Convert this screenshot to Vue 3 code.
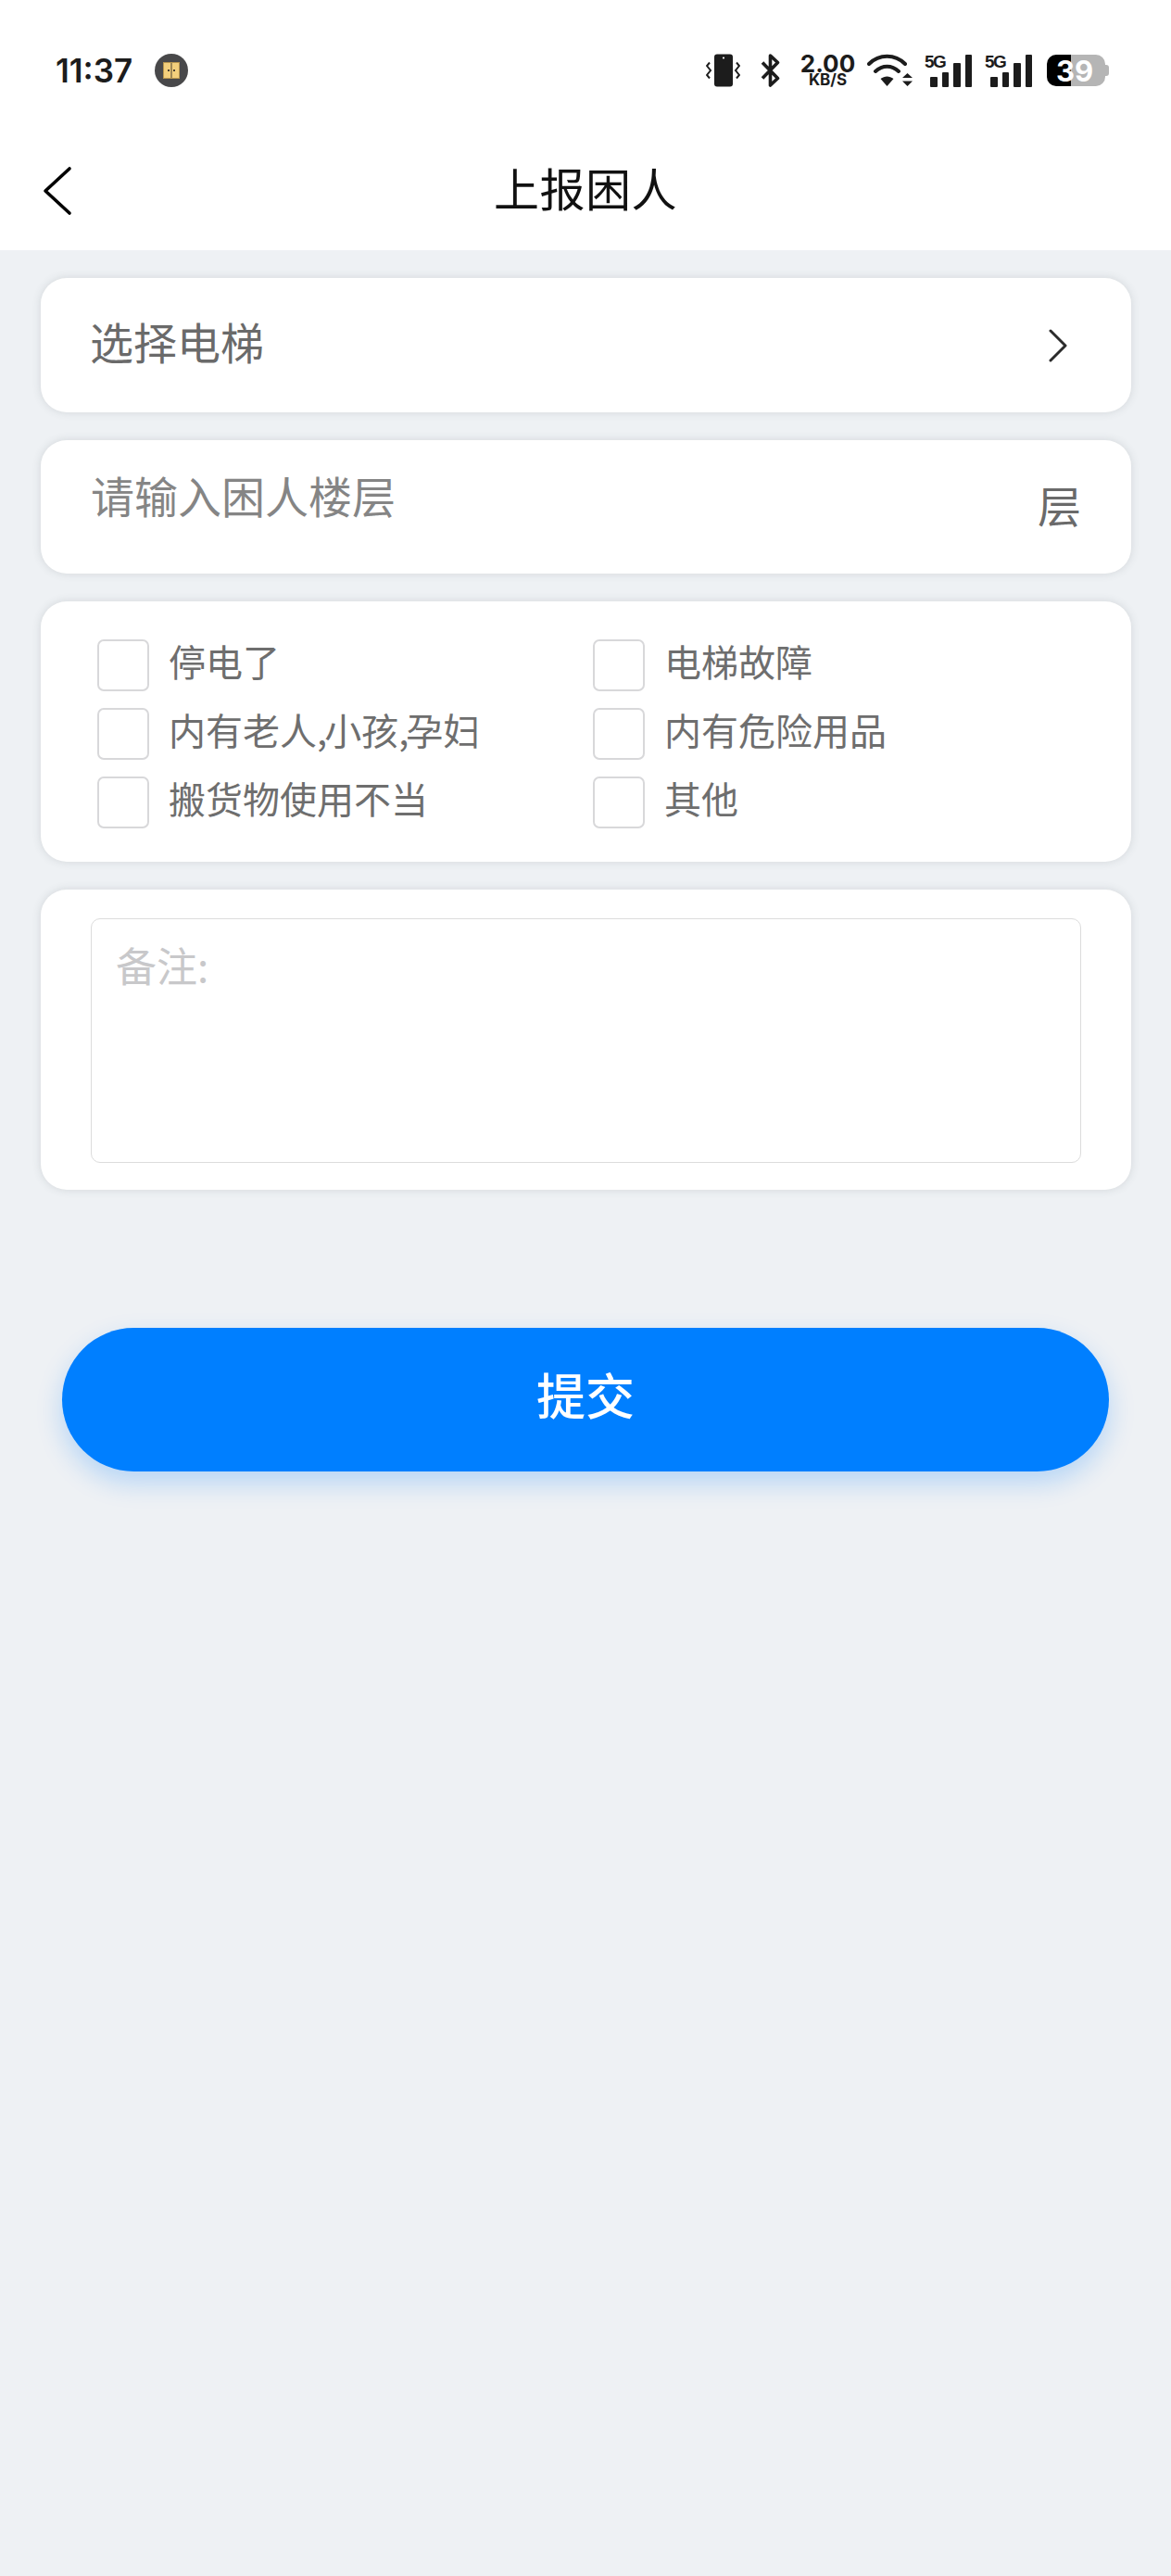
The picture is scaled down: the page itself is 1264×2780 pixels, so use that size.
<script setup>
const reasons = [
  "停电了",
  "电梯故障",
  "内有老人,小孩,孕妇",
  "内有危险用品",
  "搬货物使用不当",
  "其他",
];
</script>

<template>
  <div class="page">
    <div class="status">
      <div class="status-left">
        <span class="time">11:37</span>
        <span class="app-dot">
          <svg width="18" height="18" viewBox="0 0 18 18">
            <rect x="0.5" y="0.5" width="17" height="17" fill="#f3cf7c" stroke="#b8964e" />
            <path d="M9 1v16" stroke="#4a4030" stroke-width="1" />
            <path d="M5 9h2M11 9h2" stroke="#4a4030" stroke-width="2" />
          </svg>
        </span>
      </div>
      <div class="status-right">
        <svg class="ic-vib" width="37" height="36" viewBox="0 0 37 36">
          <rect x="9" y="0.5" width="20" height="35" rx="3" fill="#1c1c1c" />
          <circle cx="19" cy="4.5" r="1.1" fill="#fff" />
          <path d="M4 9.5L1 13l4 5-4 5 3 3.5M33 9.5l3 3.5-4 5 4 5-3 3.5" fill="none" stroke="#1c1c1c" stroke-width="2" />
        </svg>
        <svg class="ic-bt" width="21" height="36" viewBox="0 0 21 36">
          <path d="M2 9.5l16.5 17-8 7.5V2l8 7.5L2 26.5" fill="none" stroke="#1c1c1c" stroke-width="3.6" stroke-linejoin="round" />
        </svg>
        <div class="speed">
          <span class="speed-num">2.00</span>
          <span class="speed-unit">KB/S</span>
        </div>
        <svg class="ic-wifi" width="49" height="36" viewBox="0 0 49 36">
          <path d="M2 11C13 0 30 0 41 11M9 19c7.500-7 17.500-7 25 0" fill="none" stroke="#1c1c1c" stroke-width="4" stroke-linecap="round" />
          <path d="M14.500 27c4.500-3.500 9.500-3.500 14 0l-7 8z" fill="#1c1c1c" />
          <path d="M38 26l5.500-5 5.500 5zM38 29.500l5.500 5.500 5.500-5.500z" fill="#1c1c1c" />
        </svg>
        <div class="signal">
          <span class="five-g">5G</span>
          <span class="bar b1"></span>
          <span class="bar b2"></span>
          <span class="bar b3"></span>
          <span class="bar b4"></span>
        </div>
        <div class="signal second">
          <span class="five-g">5G</span>
          <span class="bar b1"></span>
          <span class="bar b2"></span>
          <span class="bar b3"></span>
          <span class="bar b4"></span>
        </div>
        <div class="battery">
          <span class="level">39</span>
          <span class="cap"></span>
        </div>
      </div>
    </div>

    <div class="nav">
      <svg class="back" width="32" height="54" viewBox="0 0 32 54">
        <path d="M29 3L3 27l26 24" fill="none" stroke="#000" stroke-width="3.6" stroke-linecap="round" stroke-linejoin="round" />
      </svg>
      <span class="title">上报困人</span>
    </div>

    <div class="content">
      <div class="card select-row">
        <span class="select-text">选择电梯</span>
        <svg width="22" height="36" viewBox="0 0 22 36">
          <path d="M3 2l16 16L3 34" fill="none" stroke="#2b2b2b" stroke-width="3" stroke-linecap="round" stroke-linejoin="round" />
        </svg>
      </div>

      <div class="card floor-row">
        <span class="floor-input">请输入困人楼层</span>
        <span class="floor-unit">层</span>
      </div>

      <div class="card reasons">
        <label v-for="r in reasons" :key="r" class="reason">
          <span class="box"></span>
          <span>
            <template v-for="(part, i) in r.split(',')" :key="i">
              <span v-if="i" class="comma">,</span>{{ part }}
            </template>
          </span>
        </label>
      </div>

      <div class="card remark-card">
        <div class="remark">备注:</div>
      </div>

      <button class="submit">提交</button>
    </div>
  </div>
</template>

<style scoped>
.page {
  width: 1264px;
  height: 2780px;
  background: #eef1f4;
  font-family: "Noto Sans CJK SC", "Liberation Sans", sans-serif;
  overflow: hidden;
}

.status {
  height: 130px;
  background: #fff;
  display: flex;
  justify-content: space-between;
  align-items: center;
  padding: 22px 67px 0 60px;
  box-sizing: border-box;
}

.status-left {
  display: flex;
  align-items: center;
  gap: 24px;
}

.time {
  font-family: Inter, sans-serif;
  font-weight: 600;
  font-size: 35px;
  color: #1c1c1c;
}

.app-dot {
  width: 36px;
  height: 36px;
  border-radius: 50%;
  background: #48484a;
  display: flex;
  align-items: center;
  justify-content: center;
}

.status-right {
  display: flex;
  align-items: center;
  gap: 14px;
}

.ic-bt {
  margin: 0 9px 0 8px;
}

.speed {
  display: flex;
  flex-direction: column;
  align-items: center;
  width: 57px;
  font-family: Inter, sans-serif;
  color: #1c1c1c;
  font-weight: 700;
}

.speed-num {
  font-size: 26px;
  line-height: 20px;
}

.speed-unit {
  font-size: 17px;
  line-height: 15px;
}

.signal {
  position: relative;
  width: 50px;
  height: 36px;
  display: flex;
  align-items: flex-end;
  gap: 5px;
  padding-left: 5px;
  box-sizing: border-box;
}

.signal.second {
  margin-left: 1px;
}

.five-g {
  position: absolute;
  left: -1px;
  top: -1px;
  font-family: "Liberation Sans", sans-serif;
  font-weight: 700;
  font-size: 19px;
  letter-spacing: -1.5px;
  line-height: 1;
  color: #1c1c1c;
}

.bar {
  width: 7.5px;
  background: #1c1c1c;
  border-radius: 1px;
}

.b1 { height: 11px; }
.b2 { height: 16px; }
.b3 { height: 26px; }
.b4 { height: 35px; }

.battery {
  position: relative;
  width: 63px;
  height: 34px;
  margin: 0 4px 0 2px;
  border-radius: 10px;
  background: linear-gradient(90deg, #000 26px, #b5b5b5 26px);
  display: flex;
  align-items: center;
  justify-content: center;
}

.level {
  font-family: Inter, sans-serif;
  font-weight: 700;
  font-size: 31px;
  margin-right: 3px;
  color: #fff;
}

.cap {
  position: absolute;
  right: -4px;
  top: 11px;
  width: 4px;
  height: 12px;
  background: #b5b5b5;
  border-radius: 0 3px 3px 0;
}

.nav {
  position: relative;
  height: 140px;
  padding-top: 3px;
  box-sizing: border-box;
  background: #fff;
  display: flex;
  align-items: center;
  justify-content: center;
}

.back {
  position: absolute;
  left: 46px;
  top: 49px;
}

.title {
  font-size: 49px;
  color: #111;
  letter-spacing: 0.5px;
}

.content {
  display: flex;
  flex-direction: column;
  gap: 30px;
  padding: 30px 43px 0 44px;
}

.card {
  background: #fff;
  border-radius: 28px;
  box-shadow: 0 0 10px rgba(70, 80, 90, 0.16);
  box-sizing: border-box;
}

.select-row {
  height: 145px;
  display: flex;
  align-items: center;
  justify-content: space-between;
  padding: 0 68px 0 53px;
  font-size: 47px;
  color: #6a6a6a;
}

.select-text {
  margin-bottom: 10px;
}

.floor-row {
  position: relative;
  height: 144px;
  padding: 26px 54px;
  font-size: 47px;
  color: #858585;
  line-height: 66px;
}

.floor-unit {
  position: absolute;
  right: 54px;
  top: 36px;
  color: #6a6a6a;
}

.reasons {
  height: 281px;
  padding: 41px 56px 0 61px;
  display: grid;
  grid-template-columns: 535px 1fr;
  grid-auto-rows: 74px;
  font-size: 40px;
  color: #6e6e6e;
}

.reason {
  display: flex;
  align-items: flex-start;
  gap: 21px;
  line-height: 46px;
}

.comma {
  margin-right: -3px;
}

.box {
  width: 56px;
  height: 56px;
  border: 2px solid #d8d8da;
  border-radius: 7px;
  box-sizing: border-box;
  background: #fff;
}

.remark-card {
  height: 324px;
  padding: 31px 54px;
}

.remark {
  height: 264px;
  border: 1px solid #dcdcdc;
  border-radius: 10px;
  box-sizing: border-box;
  padding: 21px 26px;
  font-size: 44px;
  line-height: 56px;
  color: #c8c8ca;
}

.submit {
  width: 1130px;
  height: 155px;
  margin: 119px 0 0 23px;
  padding: 0 0 14px;
  border: 0;
  border-radius: 78px;
  background: #007fff;
  color: #fff;
  font-family: inherit;
  font-size: 53px;
  font-weight: 500;
  box-shadow: 0 12px 28px rgba(0, 127, 255, 0.24);
}
</style>
